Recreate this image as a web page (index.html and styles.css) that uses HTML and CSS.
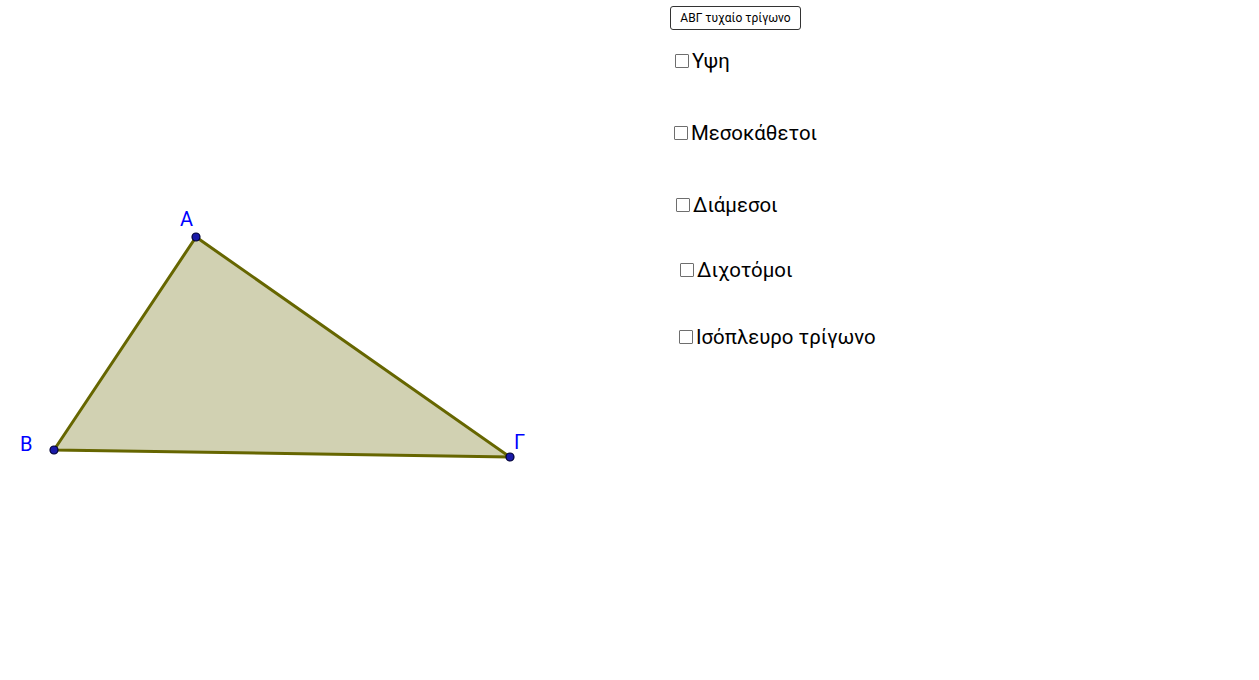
FILE: index.html
```html
<!DOCTYPE html>
<html lang="el">
<head>
<meta charset="utf-8">
<title>ΑΒΓ τυχαίο τρίγωνο</title>
<link rel="stylesheet" href="styles.css">
</head>
<body>
<div class="applet">
  <svg class="graphics" width="1259" height="680" viewBox="0 0 1259 680">
    <polygon points="196,237 54,450 510,457" class="tri"/>
    <circle cx="196" cy="237" r="4" class="pt"/>
    <circle cx="54" cy="450" r="4" class="pt"/>
    <circle cx="510" cy="457" r="4" class="pt"/>
    <text x="180" y="226" class="lbl">Α</text>
    <text x="20" y="451" class="lbl">Β</text>
    <text x="514" y="449" class="lbl">Γ</text>
  </svg>
  <button class="btn" type="button">ΑΒΓ τυχαίο τρίγωνο</button>
  <label class="chk c1"><span class="box"></span>Υψη</label>
  <label class="chk c2"><span class="box"></span>Μεσοκάθετοι</label>
  <label class="chk c3"><span class="box"></span>Διάμεσοι</label>
  <label class="chk c4"><span class="box"></span>Διχοτόμοι</label>
  <label class="chk c5"><span class="box"></span>Ισόπλευρο τρίγωνο</label>
</div>
</body>
</html>
```
FILE: styles.css
```css
html, body {
  margin: 0;
  padding: 0;
  background: #fff;
}
.applet {
  position: relative;
  width: 1259px;
  height: 680px;
  overflow: hidden;
  font-family: Roboto, "Noto Sans", sans-serif;
}
.graphics {
  position: absolute;
  left: 0;
  top: 0;
}
.tri {
  fill: rgba(102, 102, 0, 0.3);
  stroke: #666600;
  stroke-width: 3;
  stroke-linejoin: round;
}
.pt {
  fill: #1a1aa8;
  stroke: #000033;
  stroke-width: 1.2;
}
.lbl {
  fill: #0000ff;
  font-family: Roboto, "Noto Sans", sans-serif;
  font-size: 20px;
}
.btn {
  position: absolute;
  left: 670px;
  top: 6px;
  width: 131px;
  height: 24px;
  padding: 0;
  box-sizing: border-box;
  background: #fff;
  border: 1px solid #333;
  border-radius: 3px;
  font-family: Roboto, "Noto Sans", sans-serif;
  font-size: 12px;
  color: #000;
  line-height: 20px;
}
.chk {
  position: absolute;
  display: flex;
  align-items: center;
  gap: 3px;
  font-size: 20.4px;
  color: #000;
  line-height: 24px;
}
.box {
  width: 14px;
  height: 14px;
  border: 1px solid #6e6e6e;
  border-radius: 1px;
  box-sizing: border-box;
  background: #fff;
}
.c1 { left: 675px; top: 49px; }
.c2 { left: 674px; top: 121px; }
.c3 { left: 676px; top: 193px; }
.c4 { left: 680px; top: 258px; }
.c5 { left: 679px; top: 325px; }
```
